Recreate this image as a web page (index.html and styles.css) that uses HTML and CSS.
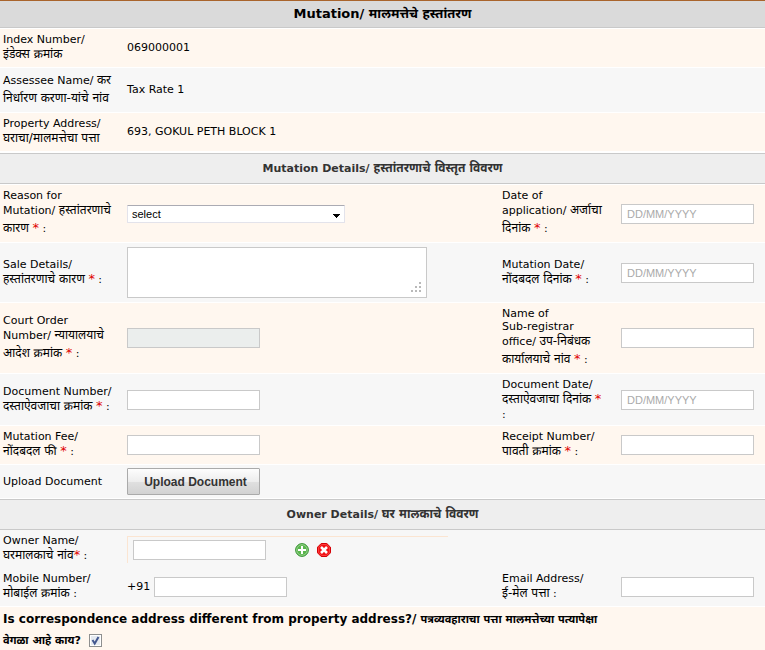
FILE: index.html
```html
<!DOCTYPE html>
<html lang="en">
<head>
<meta charset="utf-8">
<title>Mutation</title>
<link rel="stylesheet" href="styles.css">
</head>
<body>
<form class="form">
  <h1 class="title">Mutation/ <span lang="mr">मालमत्तेचे हस्तांतरण</span></h1>

  <div class="row cream">
    <div class="label"><span class="en">Index Number/</span><span class="hi"><i>इंडेक्स क्रमांक</i></span></div>
    <div class="value">069000001</div>
  </div>
  <div class="row grey">
    <div class="label"><span class="mix">Assessee Name/ <i>कर</i></span><span class="mix"><i>निर्धारण करणा-यांचे नांव</i></span></div>
    <div class="value">Tax Rate 1</div>
  </div>
  <div class="row cream">
    <div class="label"><span class="en">Property Address/</span><span class="hi"><i>घराचा/मालमत्तेचा पत्ता</i></span></div>
    <div class="value">693, GOKUL PETH BLOCK 1</div>
  </div>

  <h2 class="section">Mutation Details/ <span lang="mr">हस्तांतरणाचे विस्तृत विवरण</span></h2>

  <div class="row cream">
    <label class="label" for="reason"><span class="en">Reason for</span><span class="mix">Mutation/ <i>हस्तांतरणाचे</i></span><span class="mix"><i>कारण</i> <b>*</b> :</span></label>
    <div class="value">
      <div class="select">
        <select id="reason"><option>select</option></select>
        <svg class="arrow" width="7" height="4" viewBox="0 0 7 4" shape-rendering="crispEdges"><path d="M0 0h7v1H0zM1 1h5v1H1zM2 2h3v1H2zM3 3h1v1H3z"/></svg>
      </div>
    </div>
    <label class="label" for="appdate"><span class="en">Date of</span><span class="mix">application/ <i>अर्जाचा</i></span><span class="mix"><i>दिनांक</i> <b>*</b> :</span></label>
    <div class="value"><input class="text" id="appdate" type="text" placeholder="DD/MM/YYYY"></div>
  </div>
  <div class="row grey">
    <label class="label" for="sale"><span class="en">Sale Details/</span><span class="hi"><i>हस्तांतरणाचे कारण</i> <b>*</b> :</span></label>
    <div class="value">
      <div class="area">
        <textarea id="sale"></textarea>
        <svg class="grip" width="10" height="10" viewBox="0 0 10 10" fill="#b9b9b9" shape-rendering="crispEdges"><path d="M8 0h2v2H8zM4 4h2v2H4zM8 4h2v2H8zM0 8h2v2H0zM4 8h2v2H4zM8 8h2v2H8z"/></svg>
      </div>
    </div>
    <label class="label" for="mutdate"><span class="en">Mutation Date/</span><span class="hi"><i>नोंदबदल दिनांक</i> <b>*</b> :</span></label>
    <div class="value"><input class="text" id="mutdate" type="text" placeholder="DD/MM/YYYY"></div>
  </div>
  <div class="row cream">
    <label class="label" for="court"><span class="en">Court Order</span><span class="mix">Number/ <i>न्यायालयाचे</i></span><span class="mix"><i>आदेश क्रमांक</i> <b>*</b> :</span></label>
    <div class="value"><input class="text" id="court" type="text" disabled></div>
    <label class="label" for="office"><span class="en">Name of</span><span class="en">Sub-registrar</span><span class="mix">office/ <i>उप-निबंधक</i></span><span class="mix"><i>कार्यालयाचे नांव</i> <b>*</b> :</span></label>
    <div class="value"><input class="text" id="office" type="text"></div>
  </div>
  <div class="row grey">
    <label class="label" for="docno"><span class="en">Document Number/</span><span class="hi"><i>दस्ताऐवजाचा क्रमांक</i> <b>*</b> :</span></label>
    <div class="value"><input class="text" id="docno" type="text"></div>
    <label class="label" for="docdate"><span class="en">Document Date/</span><span class="hi"><i>दस्ताऐवजाचा दिनांक</i> <b>*</b></span><span class="en">:</span></label>
    <div class="value"><input class="text" id="docdate" type="text" placeholder="DD/MM/YYYY"></div>
  </div>
  <div class="row cream">
    <label class="label" for="fee"><span class="en">Mutation Fee/</span><span class="hi"><i>नोंदबदल फी</i> <b>*</b> :</span></label>
    <div class="value"><input class="text" id="fee" type="text"></div>
    <label class="label" for="receipt"><span class="en">Receipt Number/</span><span class="hi"><i>पावती क्रमांक</i> <b>*</b> :</span></label>
    <div class="value"><input class="text" id="receipt" type="text"></div>
  </div>
  <div class="row grey upload-row">
    <div class="label">Upload Document</div>
    <div class="value"><button class="upload" type="button">Upload Document</button></div>
  </div>

  <h2 class="section flush">Owner Details/ <span lang="mr">घर मालकाचे विवरण</span></h2>

  <div class="row grey joined">
    <label class="label" for="owner"><span class="en">Owner Name/</span><span class="hi"><i>घरमालकाचे नांव</i><b>*</b> :</span></label>
    <div class="owner">
      <input class="text" id="owner" type="text">
      <div class="actions">
        <button class="icon" type="button" aria-label="Add owner">
          <svg width="14" height="14" viewBox="0 0 14 14"><circle cx="7" cy="7" r="6.4" fill="#59b54c" stroke="#3c9639"/><circle cx="7" cy="7" r="5.3" fill="none" stroke="#a4d79a" stroke-width=".8"/><path d="M6 3h2v3h3v2H8v3H6V8H3V6h3z" fill="#fff"/></svg>
        </button>
        <button class="icon" type="button" aria-label="Remove owner">
          <svg width="14" height="14" viewBox="0 0 14 14"><path d="M4.200.5h5.600l3.700 3.700v5.600l-3.700 3.700H4.200L.5 9.800V4.200z" fill="#f20d12" stroke="#d40006"/><path d="M4.600 1.600h4.800l3 3v4.800l-3 3H4.600l-3-3V4.600z" fill="none" stroke="#ff5a55" stroke-width=".7"/><path d="M4 4l6 6M10 4l-6 6" stroke="#fff" stroke-width="2.600"/></svg>
        </button>
      </div>
    </div>
  </div>
  <div class="row grey">
    <label class="label" for="mobile"><span class="en">Mobile Number/</span><span class="hi"><i>मोबाईल क्रमांक</i> :</span></label>
    <div class="value phone"><span>+91</span><input class="text" id="mobile" type="text"></div>
    <label class="label" for="email"><span class="en">Email Address/</span><span class="hi"><i>ई-मेल पत्ता</i> :</span></label>
    <div class="value"><input class="text" id="email" type="text"></div>
  </div>
  <div class="question cream">
    <label for="differs">Is correspondence address different from property address?/ <span lang="mr">पत्रव्यवहाराचा पत्ता मालमत्तेच्या पत्यापेक्षा<br>वेगळा आहे काय?</span></label>
    <span class="check"><input id="differs" type="checkbox" checked><svg class="tick" width="13" height="13" viewBox="0 0 13 13"><path d="M3.500 6l2.200 3.500L9.500 3" fill="none" stroke="#43578f" stroke-width="2"/></svg></span>
  </div>
</form>
</body>
</html>
```
FILE: styles.css
```css
* { box-sizing: border-box; }

body {
  margin: 0;
  background: #fff;
  color: #000;
  font: 11px/18px "DejaVu Sans", "Noto Sans Devanagari", "Noto Sans", sans-serif;
}

.form { border-top: 1px solid #a9642c; }

.title, .section {
  margin: 0;
  text-align: center;
  font-weight: bold;
  border-bottom: 1px solid #c9c9c9;
}
.title {
  height: 27px;
  padding: 4px 0;
  margin-bottom: 1px;
  font-size: 13px;
  background: #dadada;
}
.section {
  height: 31px;
  margin: 1px 0;
  padding: 6px 0 5px;
  font-size: 11px;
  color: #333;
  background: #eee;
  border-top: 1px solid #c9c9c9;
}
.section span { font-size: 12px; line-height: 13px; }
.section.flush { margin: 0; }

.row {
  display: grid;
  grid-template-columns: 127px minmax(0, 1fr) 119px 144px;
  align-items: center;
  padding: 4px 0;
  border-bottom: 1px solid #fff;
}
.cream { background: #fff7ef; }
.grey { background: #f7f7f7; }

.label { padding-left: 3px; white-space: nowrap; }
.value + .label { padding-left: 0; }
.label span { display: block; }
.label i { font-style: normal; font-size: 12px; line-height: 13px; }
.label b { font-weight: normal; font-size: 13px; line-height: 13px; color: #e00000; }
.en { line-height: 13px; }
.hi { line-height: 17px; }
.mix { line-height: 18px; }

.value { display: flex; align-items: center; }

.text {
  width: 133px;
  height: 20px;
  padding: 0 5px;
  border: 1px solid #c9c9c9;
  border-radius: 0;
  background: #fff;
  font: 11px "Liberation Sans", sans-serif;
}
.text:disabled { background: #ebeeed; }
.text::placeholder { color: #aaa; }

.select { position: relative; width: 218px; }
.select select {
  display: block;
  width: 100%;
  height: 18px;
  padding: 0 4px;
  appearance: none;
  border: 1px solid #e3e3eb;
  border-top-color: #ababb3;
  border-radius: 1px;
  background: #fff;
  color: #000;
  font: 11px "Liberation Sans", sans-serif;
}
.arrow { position: absolute; right: 5px; top: 9px; pointer-events: none; }

.area { position: relative; width: 300px; }
.area textarea {
  display: block;
  width: 100%;
  height: 51px;
  resize: none;
  border: 1px solid #c9c9c9;
  background: #fff;
}
.grip { position: absolute; right: 6px; bottom: 6px; pointer-events: none; }

.upload-row { padding: 3px 0; }
.upload {
  width: 133px;
  height: 27px;
  padding: 0 0 0 4px;
  border: 1px solid #aaa;
  border-radius: 1px;
  background: linear-gradient(#fdfdfd, #ededed 50%, #e0e0e0 51%, #d2d2d2);
  color: #333;
  font: bold 12px "Liberation Sans", sans-serif;
}

.joined { border-bottom: 0; }
.owner {
  display: flex;
  align-items: center;
  grid-column: 2;
  gap: 29px;
  width: 321px;
  padding: 3px 5px;
  border: solid #fbe5d2;
  border-width: 1px 0 0 1px;
}
.actions { display: flex; gap: 8px; }
.icon { padding: 0; border: 0; background: none; line-height: 0; }

.phone { gap: 4px; }

.question { padding: 2px 3px 6px; font-size: 12px; font-weight: bold; line-height: 20px; }
.question label span { font-size: 11px; }
.check {
  display: inline-block;
  position: relative;
  width: 13px;
  height: 13px;
  margin-left: 4px;
  vertical-align: middle;
}
.check input {
  display: block;
  width: 13px;
  height: 13px;
  margin: 0;
  appearance: none;
  border: 1px solid #8e8f8f;
  background: #e6eaf0;
  box-shadow: inset 0 0 0 1px #fff;
}
.tick { position: absolute; left: 0; top: 0; pointer-events: none; }
```
